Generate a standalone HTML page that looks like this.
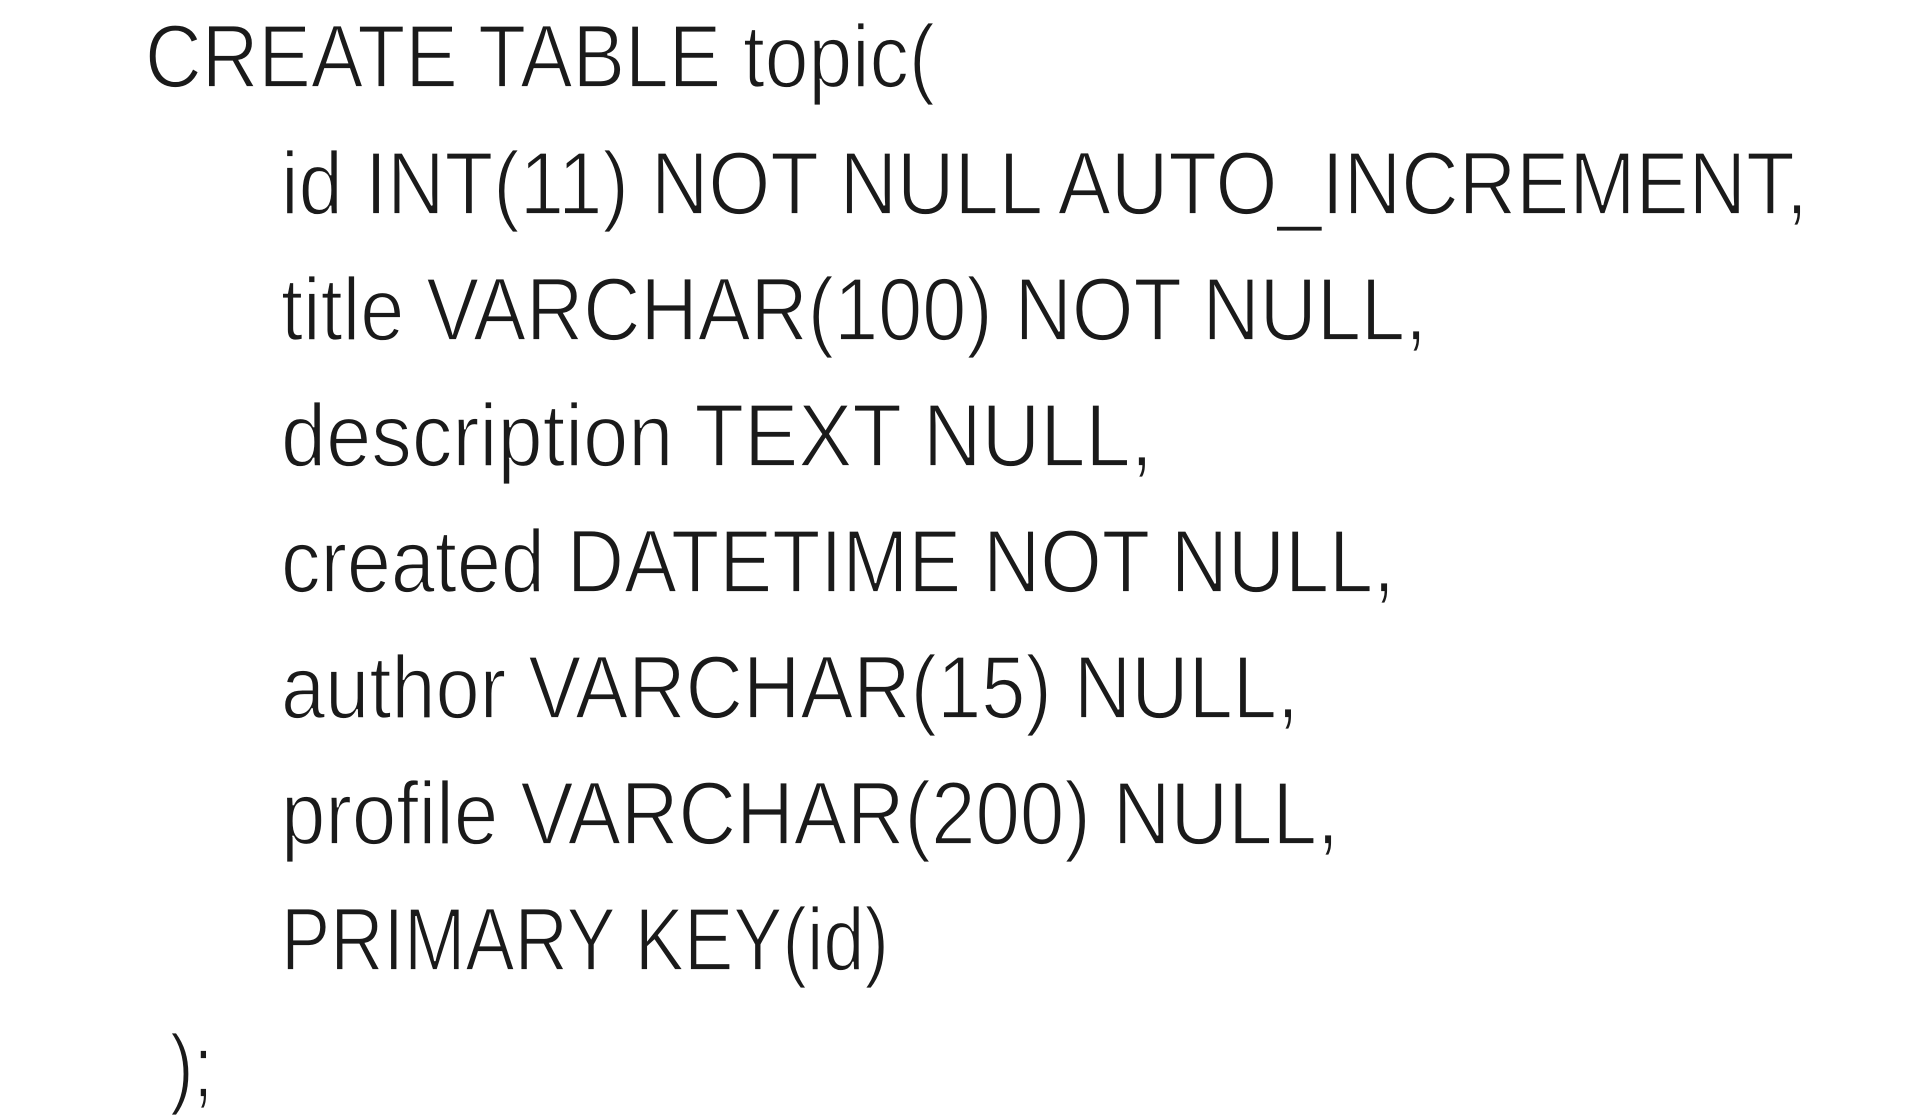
<!DOCTYPE html>
<html><head><meta charset="utf-8"><style>
html,body{margin:0;padding:0;background:#fff;width:1932px;height:1118px;overflow:hidden}
svg{display:block}
text{font-family:"Liberation Sans",sans-serif;font-size:89px;fill:#1a1a1a;stroke:#fff;stroke-width:1.8px}
</style></head><body>
<svg width="1932" height="1118" viewBox="0 0 1932 1118">
<text x="145" y="87" textLength="790" lengthAdjust="spacingAndGlyphs">CREATE TABLE topic(</text>
<text x="281" y="214" textLength="1527" lengthAdjust="spacingAndGlyphs">id INT(11) NOT NULL AUTO_INCREMENT,</text>
<text x="281" y="340" textLength="1146" lengthAdjust="spacingAndGlyphs">title VARCHAR(100) NOT NULL,</text>
<text x="281" y="466" textLength="872" lengthAdjust="spacingAndGlyphs">description TEXT NULL,</text>
<text x="281" y="592" textLength="1114" lengthAdjust="spacingAndGlyphs">created DATETIME NOT NULL,</text>
<text x="281" y="718" textLength="1018" lengthAdjust="spacingAndGlyphs">author VARCHAR(15) NULL,</text>
<text x="281" y="844" textLength="1058" lengthAdjust="spacingAndGlyphs">profile VARCHAR(200) NULL,</text>
<text x="281" y="970" textLength="608" lengthAdjust="spacingAndGlyphs">PRIMARY KEY(id)</text>
<text x="170" y="1097" textLength="43" lengthAdjust="spacingAndGlyphs">);</text>
</svg>
</body></html>
